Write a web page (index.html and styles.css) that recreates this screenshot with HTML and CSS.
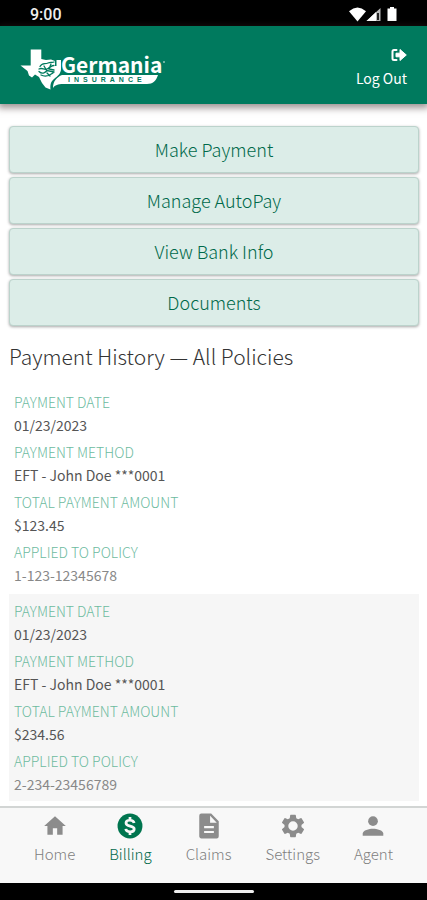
FILE: index.html
```html
<!DOCTYPE html>
<html lang="en">
<head>
<meta charset="utf-8">
<meta name="viewport" content="width=device-width, initial-scale=1">
<title>Germania Insurance - Billing</title>
<link rel="stylesheet" href="styles.css">
</head>
<body>
<div class="status-bar">
  <span>9:00</span>
  <svg class="status-icons" viewBox="0 0 50 16" width="50" height="16" aria-hidden="true">
    <path fill="#fff" d="M0 4.200Q8.500-3 17 4.200L8.500 14.500z"/>
    <path fill="#bbb" d="M31.500 1v13H17.500z"/>
    <path fill="#fff" d="M27 5v9h-9.500z"/>
    <path fill="#222" d="M28 6h2v7h-2z"/>
    <path fill="#fff" d="M41 0h4v1.500h2.500v12.500h-9V1.500H41z"/>
  </svg>
</div>
<header class="app-header">
  <svg class="logo" viewBox="0 0 148 44" width="148" height="44" role="img" aria-label="Germania Insurance">
    <path fill="#fff" d="M10.700 3.500H21.300V13l4.700 1 5-.5 4 1.500v5h1.500V14h4.500v9c0 4-3 7-7 10-3 2.500-4 5.500-3.500 10.500l-5-2L22 37l-3-6-4-2.500-3 3-3-2-1.500-4.500L.5 19.500H10.700z"/>
    <path fill="none" stroke="#007a5e" stroke-width="1.300" stroke-linecap="round" d="M20 20.500c2-4 5-2 8-3.500s4 0 6-1M19 23c4-2 5 2 9-.500s4-3 6-3M19 25.500c3 3 6 1.500 8-1l7 1.500M21 29c4 2 8 1 12-2M24 20l3 5M31 18l-2 5 5 1M27 27l3 3"/>
    <text class="logo-name" x="41" y="27">Germania</text>
    <path fill="#fff" d="M42 29h96c-2 6-5 9-11 9H43c-5 0-8 1-10 4 0-7 4-11 9-13z"/>
    <text class="logo-sub" x="48" y="36">INSURANCE</text>
    <circle cx="144" cy="16" r="1" fill="#8fc6b7"/>
  </svg>
  <a class="logout" href="#logout">
    <svg viewBox="0 0 16 14" width="16" height="14" aria-hidden="true">
      <path fill="none" stroke="#fff" stroke-width="2" stroke-linecap="round" d="M5.500 2H3Q1.500 2 1.500 3.500v7Q1.500 12 3 12h2.500"/>
      <path fill="#fff" stroke="#fff" stroke-linejoin="round" d="M5 5.200h4V1.500L15.300 7 9 12.500V8.800H5z"/>
    </svg>
    <span>Log Out</span>
  </a>
</header>
<main class="content">
  <div class="actions">
    <button type="button">Make Payment</button>
    <button type="button">Manage AutoPay</button>
    <button type="button">View Bank Info</button>
    <button type="button">Documents</button>
  </div>
  <h1>Payment History — All Policies</h1>
  <dl class="record">
    <div><dt>PAYMENT DATE</dt><dd>01/23/2023</dd></div>
    <div><dt>PAYMENT METHOD</dt><dd>EFT - John Doe ***0001</dd></div>
    <div><dt>TOTAL PAYMENT AMOUNT</dt><dd>$123.45</dd></div>
    <div><dt>APPLIED TO POLICY</dt><dd class="policy">1-123-12345678</dd></div>
  </dl>
  <dl class="record">
    <div><dt>PAYMENT DATE</dt><dd>01/23/2023</dd></div>
    <div><dt>PAYMENT METHOD</dt><dd>EFT - John Doe ***0001</dd></div>
    <div><dt>TOTAL PAYMENT AMOUNT</dt><dd>$234.56</dd></div>
    <div><dt>APPLIED TO POLICY</dt><dd class="policy">2-234-23456789</dd></div>
  </dl>
</main>
<nav class="tabs">
  <a href="#home"><svg viewBox="0 0 24 24"><path d="M10 20v-6h4v6h5v-8h3L12 3 2 12h3v8z"/></svg>Home</a>
  <a href="#billing" class="active" aria-current="page"><svg viewBox="0 0 24 24"><circle cx="12" cy="12" r="11.500"/><path class="dollar" d="M15.800 9.200C15.500 7.500 14 6.700 12 6.700c-2.200 0-3.700 1-3.700 2.600 0 3.800 7.600 1.800 7.600 5.500 0 1.600-1.600 2.600-3.800 2.600s-3.800-1-4-2.700M12 3.700v3M12 17.300v3"/></svg>Billing</a>
  <a href="#claims"><svg viewBox="0 0 24 24"><path d="M14 0.500H5a2 2 0 0 0-2 2v19c0 1.100.9 2 2 2h14a2 2 0 0 0 2-2V7.500zm2.500 18h-9v-2h9zm0-4.500h-9v-2h9zM13 9V2.500L19.200 9z"/></svg>Claims</a>
  <a href="#settings"><svg viewBox="1 1 22 22"><path d="M19.140 12.940c.04-.3.060-.61.060-.94s-.02-.64-.07-.94l2.030-1.580a.49.490 0 0 0 .12-.61l-1.920-3.320a.488.488 0 0 0-.59-.22l-2.390.96c-.5-.38-1.030-.7-1.620-.94l-.36-2.540a.484.484 0 0 0-.48-.41h-3.840c-.24 0-.43.170-.47.410l-.36 2.540c-.59.240-1.130.570-1.620.94l-2.390-.96a.49.490 0 0 0-.59.220L2.740 8.870c-.12.210-.08.470.12.610l2.030 1.580c-.05.3-.09.630-.09.940s.02.640.07.940l-2.030 1.580a.49.490 0 0 0-.12.610l1.920 3.320c.12.220.37.290.59.220l2.390-.96c.5.380 1.030.7 1.620.94l.36 2.540c.05.240.24.410.48.410h3.840c.24 0 .44-.17.470-.41l.36-2.540c.59-.24 1.130-.56 1.620-.94l2.390.96c.22.080.47 0 .59-.22l1.920-3.320a.49.490 0 0 0-.12-.61zM12 16a4 4 0 1 1 0-8 4 4 0 0 1 0 8z"/></svg>Settings</a>
  <a href="#agent"><svg viewBox="0 0 24 24"><circle cx="12" cy="7.500" r="4.500"/><path d="M2.500 21v-2c0-3.200 6-4.500 9.500-4.500s9.500 1.300 9.500 4.500v2z"/></svg>Agent</a>
</nav>
<div class="gesture-bar"><span></span></div>
</body>
</html>
```
FILE: styles.css
```css
* { box-sizing: border-box; }

body {
  margin: 0;
  min-height: 100vh;
  display: flex;
  flex-direction: column;
  background: #fff;
  color: #333;
  font-family: "Noto Sans CJK JP", "Open Sans", sans-serif;
  font-size: 14px;
  font-weight: 300;
}

.status-bar {
  display: flex;
  justify-content: space-between;
  align-items: center;
  height: 26px;
  padding: 3px 28px 0 30px;
  background: #000;
  color: #eee;
  font: 500 16px/20px Roboto, sans-serif;
}

.app-header {
  display: flex;
  justify-content: space-between;
  align-items: center;
  height: 78px;
  padding: 6px 20px 0;
  background: #007a5e;
  box-shadow: 0 2px 7px 2px rgba(60, 40, 40, 0.5);
}

.logo-name {
  fill: #fff;
  font: 700 21px "Noto Sans CJK JP", sans-serif;
}

.logo-sub {
  fill: #007a5e;
  font: 700 7px "Liberation Sans", sans-serif;
  letter-spacing: 4px;
}

.logout {
  display: flex;
  flex-direction: column;
  align-items: flex-end;
  gap: 6px;
  color: #fff;
  font-weight: 400;
  line-height: 20px;
  text-decoration: none;
}

.content {
  flex: 1;
  padding: 22px 8px 3px 9px;
}

.actions {
  display: grid;
  gap: 4px;
}

.actions button {
  height: 47px;
  padding: 0 0 2px;
  border: 1px solid #bcd3cc;
  border-radius: 4px;
  background: #dcede8;
  box-shadow: 0 1px 3px rgba(0, 0, 0, 0.35);
  color: #00694a;
  font: inherit;
  font-size: 18px;
}

h1 {
  margin: 15px 0 14px;
  font-size: 21px;
  font-weight: 300;
  line-height: 30px;
}

.record {
  display: grid;
  gap: 4px;
  margin: 0 0 2px;
  padding: 6px 5px 5px;
  line-height: 23px;
}

.record:nth-of-type(even) { background: #f6f6f6; }

dt { color: #6dbb9f; }

dd {
  margin: 0;
  color: #555;
  font-weight: 400;
}

.policy { color: #888; }

.tabs {
  display: flex;
  justify-content: space-evenly;
  height: 77px;
  padding-top: 5px;
  border-top: 2px solid #d2d5d4;
  background: #f8f8f8;
}

.tabs a {
  display: flex;
  flex-direction: column;
  align-items: center;
  gap: 4px;
  color: #808080;
  font-size: 15px;
  line-height: 22px;
  text-decoration: none;
}

.tabs svg { width: 26px; height: 26px; fill: #8c8c8c; }

.tabs .active { color: #00694a; }

.tabs .active svg { fill: #00754f; }

.tabs .dollar {
  fill: none;
  stroke: #f8f8f8;
  stroke-width: 2.5;
}

.gesture-bar {
  display: flex;
  justify-content: center;
  align-items: center;
  height: 17px;
  background: #000;
}

.gesture-bar span {
  width: 80px;
  height: 3px;
  border-radius: 2px;
  background: #eee;
}
```
